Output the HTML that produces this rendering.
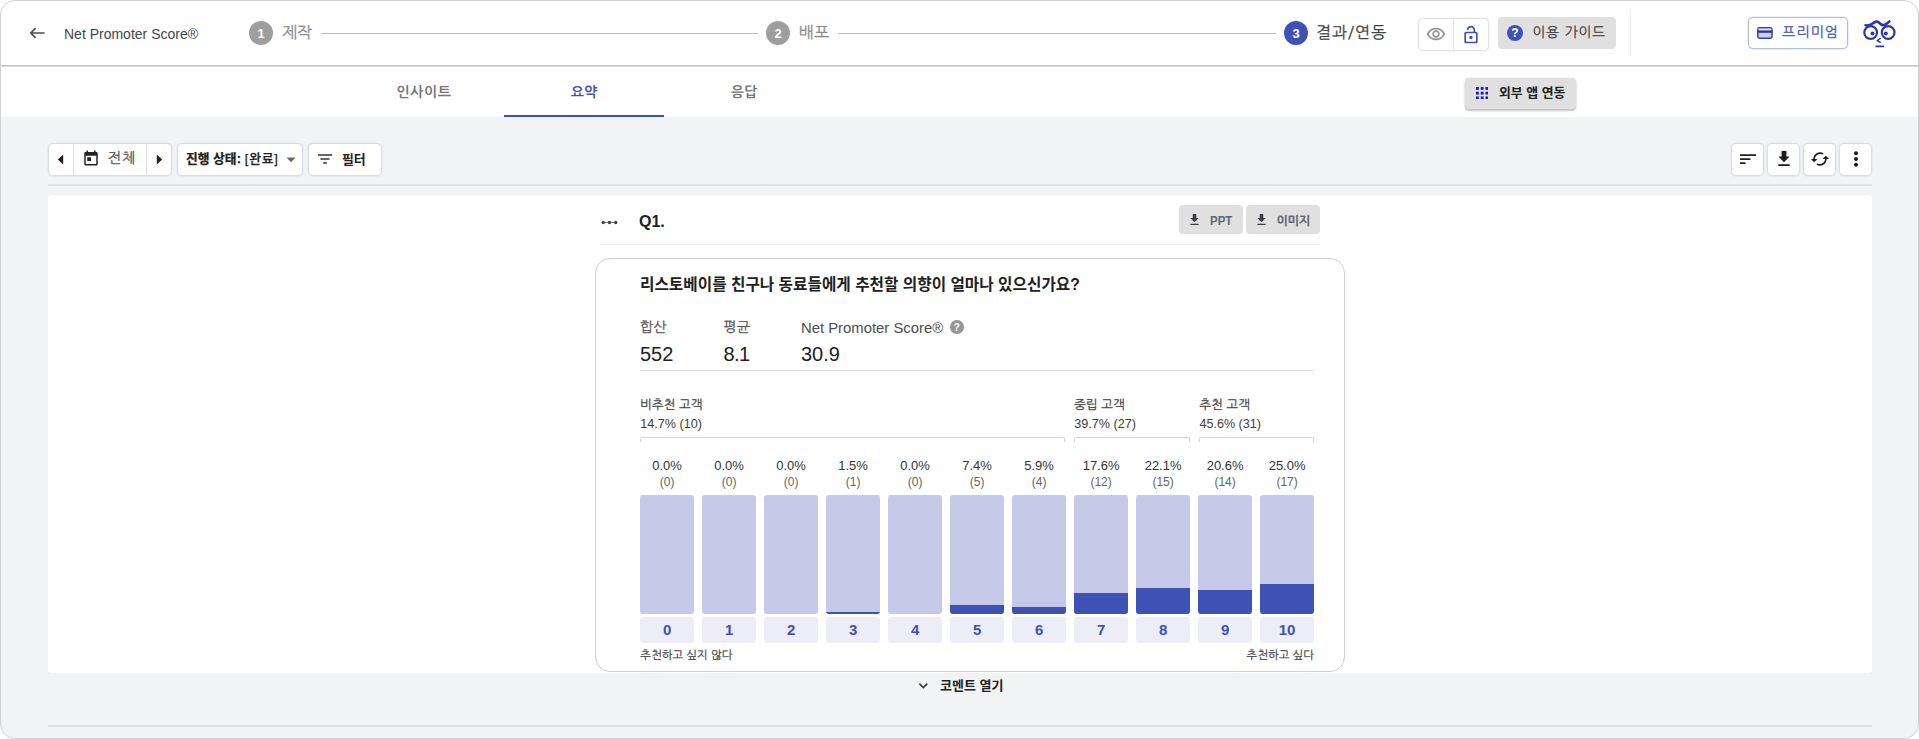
<!DOCTYPE html>
<html lang="ko">
<head>
<meta charset="utf-8">
<title>Net Promoter Score®</title>
<style>
*{box-sizing:border-box;margin:0;padding:0}
html,body{width:1919px;height:739px;overflow:hidden;background:#fff}
body{font-family:"Liberation Sans","NanumGothic","Noto Sans CJK KR",sans-serif;color:#212121;position:relative}
.abs{position:absolute}
#frame{position:absolute;left:0;top:0;width:1919px;height:739px;border-radius:15px;overflow:hidden;background:#f1f3f5}
#frameb{position:absolute;left:0;top:0;width:1919px;height:739px;border-radius:15px;border:1px solid #d2d2d2;z-index:50;pointer-events:none}
#hdr{left:0;top:0;width:1919px;height:66px;background:#fff;border-bottom:1px solid #c2c2c2;box-shadow:0 1px 0.700px rgba(0,0,0,.130);z-index:5}
#tabs{left:0;top:66px;width:1919px;height:51px;background:#fff}
.t{position:absolute;white-space:nowrap;line-height:1}
.ko{font-family:"NanumGothic","Noto Sans CJK KR",sans-serif;-webkit-text-stroke:0.250px currentColor}
.kb{font-family:"Liberation Sans","Noto Sans CJK KR","NanumGothic",sans-serif;font-weight:700}
.box{position:absolute;background:#fff;border:1px solid #d9dde4;border-radius:5px;box-shadow:0 0 0 0.500px rgba(217,221,228,.6)}

.gl{font-size:12.5px;color:#444}
.gv{font-size:12.6px;color:#3c3c3c}
.br{height:5px;border:1px solid #d6d6d6;border-bottom:none;border-radius:2px 2px 0 0}
.pc{width:53.6px;text-align:center;font-size:13px;color:#333}
.ct{width:53.6px;text-align:center;font-size:12px;color:#666}
.bar{top:495px;width:53.6px;height:118.5px;background:#c5cae9;border-radius:3px;overflow:hidden}
.bar i{position:absolute;left:0;bottom:0;width:100%;background:#3f51b5}
.nb{top:617px;width:53.6px;height:26px;background:#ededf8;border-radius:3px;text-align:center;font-size:15px;font-weight:700;color:#3f51b5;line-height:26px}
.el{font-size:11.4px;color:#4a4a4a}
</style>
</head>
<body>
<div id="frame">

<!-- ===== header ===== -->
<div id="hdr" class="abs">
  <svg class="abs" style="left:29px;top:25px" width="17" height="16" viewBox="0 0 17 16"><path d="M15.6 8H2M6.600 3.200L1.800 8L6.600 12.800" fill="none" stroke="#4f4f4f" stroke-width="1.700"/></svg>
  <div class="t" id="title" style="left:64px;top:27px;font-size:14px;color:#41464e">Net Promoter Score®</div>

  <div class="abs" style="left:249px;top:21px;width:24px;height:24px;border-radius:50%;background:#9e9e9e"></div>
  <div class="t" style="left:249px;top:26.500px;width:24px;text-align:center;font-size:13px;font-weight:700;color:#fff">1</div>
  <div class="t ko" id="s1" style="left:282px;top:24px;font-size:16px;color:#8a8a8a">제작</div>
  <div class="abs" style="left:321px;top:33px;width:437px;height:1px;background:#bdbdbd"></div>

  <div class="abs" style="left:766px;top:21px;width:24px;height:24px;border-radius:50%;background:#9e9e9e"></div>
  <div class="t" style="left:766px;top:26.500px;width:24px;text-align:center;font-size:13px;font-weight:700;color:#fff">2</div>
  <div class="t ko" id="s2" style="left:799px;top:24px;font-size:16px;color:#8a8a8a">배포</div>
  <div class="abs" style="left:838px;top:33px;width:438px;height:1px;background:#bdbdbd"></div>

  <div class="abs" style="left:1284px;top:21px;width:24px;height:24px;border-radius:50%;background:#3f51b5"></div>
  <div class="t" style="left:1284px;top:26.500px;width:24px;text-align:center;font-size:13px;font-weight:700;color:#fff">3</div>
  <div class="t ko" id="s3" style="left:1316px;top:24px;font-size:16px;letter-spacing:1px;color:#424242">결과/연동</div>

  <div class="box" style="left:1418px;top:18px;width:71px;height:33px;border-color:#e3e3e3;box-shadow:0 0 0 0.500px rgba(227,227,227,.6)"></div>
  <div class="abs" style="left:1453px;top:18px;width:1px;height:33px;background:#e3e3e3"></div>
  <svg class="abs" style="left:1426px;top:24px" width="20" height="20" viewBox="0 0 24 24"><path d="M12 6.5c3.8 0 7.2 2.1 8.800 5.500-1.600 3.400-5 5.500-8.800 5.500s-7.200-2.100-8.800-5.500C4.800 8.600 8.200 6.500 12 6.500m0-2C7 4.500 2.700 7.600 1 12c1.700 4.400 6 7.500 11 7.500s9.300-3.100 11-7.500c-1.700-4.400-6-7.500-11-7.500zm0 5c1.400 0 2.500 1.100 2.500 2.500s-1.100 2.500-2.500 2.500-2.500-1.100-2.500-2.500 1.100-2.500 2.500-2.500m0-2c-2.500 0-4.500 2-4.500 4.500s2 4.500 4.500 4.500 4.500-2 4.500-4.500-2-4.500-4.500-4.500z" fill="#959595"/></svg>
  <svg class="abs" style="left:1461px;top:25px" width="20" height="20" viewBox="0 0 24 24"><path d="M12 13c-1.100 0-2 .9-2 2s.9 2 2 2 2-.9 2-2-.9-2-2-2zm6-5h-1V6c0-2.760-2.240-5-5-5-2.280 0-4.270 1.540-4.840 3.750-.14.540.18 1.080.72 1.220.53.140 1.080-.18 1.220-.72C9.440 3.930 10.630 3 12 3c1.650 0 3 1.350 3 3v2H6c-1.100 0-2 .9-2 2v10c0 1.100.9 2 2 2h12c1.100 0 2-.9 2-2V10c0-1.100-.9-2-2-2zm0 11c0 .55-.45 1-1 1H7c-.55 0-1-.45-1-1v-8c0-.55.450-1 1-1h10c.55 0 1 .45 1 1v8z" fill="#3f51b5"/></svg>

  <div class="abs" style="left:1498px;top:17px;width:118px;height:32px;border-radius:4px;background:#e0e0e0"></div>
  <div class="abs" style="left:1507px;top:25px;width:16px;height:16px;border-radius:50%;background:#3f51b5"></div>
  <div class="t" style="left:1507px;top:27px;width:16px;text-align:center;font-size:12px;font-weight:700;color:#fff">?</div>
  <div class="t ko" id="guide" style="left:1532.500px;top:26px;font-size:13.700px;letter-spacing:0.900px;color:#424242">이용 가이드</div>

  <div class="abs" style="left:1630px;top:9px;width:1px;height:48px;background:#eceef4"></div>

  <div class="abs" style="left:1748px;top:17px;width:100px;height:32px;border-radius:5px;border:1px solid #b4bbe8;box-shadow:0 0 0 0.5px rgba(180,187,232,.5);background:#fff"></div>
  <svg class="abs" style="left:1757px;top:27px" width="16" height="12" viewBox="0 0 16 12"><rect x="0.800" y="0.800" width="14.200" height="10.400" rx="1.600" fill="#ccd0ee" stroke="#3342b0" stroke-width="1.500"/><rect x="1.500" y="1.700" width="12.800" height="1.200" fill="#e4e6f6"/><rect x="0.500" y="3.500" width="14.800" height="2.300" fill="#2a36a8"/></svg>
  <div class="t ko" id="prem" style="left:1782px;top:25px;font-size:14px;color:#3f51b5;letter-spacing:1.100px">프리미엄</div>

  <svg class="abs" style="left:1856px;top:14px" width="48" height="38" viewBox="0 0 48 38">
    <g fill="none" stroke="#2a36b1" stroke-linecap="round" stroke-linejoin="round">
      <circle cx="14.650" cy="18.500" r="6.350" stroke-width="2.200"/>
      <circle cx="32.150" cy="18.500" r="6.350" stroke-width="2.200"/>
      <path d="M9.600 11.200C12.500 12.700 15.500 10.200 18 8.600C20.300 7.100 21.800 7.100 23.300 8.900C25 11 26.300 11.600 28.300 10.900C30.500 10.100 32 8.900 33.400 7.400" stroke-width="2.600"/>
      <path d="M24.200 24.500L21.200 26.500L24.200 28.300" stroke-width="1.500"/>
      <path d="M19.400 32.400H28" stroke-width="1.900" stroke-linecap="butt"/>
    </g>
    <circle cx="16.500" cy="19.500" r="2" fill="#2a36b1"/>
    <circle cx="29.800" cy="19.500" r="2" fill="#2a36b1"/>
  </svg>
</div>

<!-- ===== tabs ===== -->
<div id="tabs" class="abs">
  <div class="t ko" id="tab1" style="-webkit-text-stroke:0;left:344px;width:160px;text-align:center;top:18.500px;font-size:14px;letter-spacing:0.600px;font-weight:700;color:#757575">인사이트</div>
  <div class="t ko" id="tab2" style="-webkit-text-stroke:0;left:504px;width:160px;text-align:center;top:18.500px;font-size:14px;font-weight:700;color:#3f51b5">요약</div>
  <div class="t ko" id="tab3" style="-webkit-text-stroke:0;left:664px;width:160px;text-align:center;top:18.500px;font-size:14px;font-weight:700;color:#757575">응답</div>
  <div class="abs" style="left:504px;top:48.500px;width:160px;height:2.500px;background:#3f51b5"></div>

  <div class="abs" style="left:1465px;top:12px;width:111px;height:31px;border-radius:4px;background:#e0e0e0;box-shadow:0 2px 2px rgba(0,0,0,.22),0 0 2px rgba(0,0,0,.12)"></div>
  <svg class="abs" style="left:1476px;top:21px" width="12.300" height="12.300" viewBox="0 0 13 13"><g fill="#1a18c4"><rect x="0" y="0" width="3" height="3"/><rect x="5" y="0" width="3" height="3"/><rect x="10" y="0" width="3" height="3"/><rect x="0" y="5" width="3" height="3"/><rect x="5" y="5" width="3" height="3"/><rect x="10" y="5" width="3" height="3"/><rect x="0" y="10" width="3" height="3"/><rect x="5" y="10" width="3" height="3"/><rect x="10" y="10" width="3" height="3"/></g></svg>
  <div class="t kb" id="ext" style="left:1499px;top:21px;font-size:12.900px;font-weight:700;color:#212121">외부 앱 연동</div>
</div>

<!-- ===== toolbar ===== -->
<div class="box" style="left:48px;top:143px;width:124px;height:33px"></div>
<div class="abs" style="left:73px;top:143px;width:1px;height:33px;background:#dcdfe6"></div>
<div class="abs" style="left:146px;top:143px;width:1px;height:33px;background:#dcdfe6"></div>
<svg class="abs" style="left:57px;top:153.500px" width="7" height="11" viewBox="0 0 7 11"><path d="M6.200 0.500L0.800 5.500L6.200 10.500z" fill="#222"/></svg>
<svg class="abs" style="left:156px;top:153.500px" width="7" height="11" viewBox="0 0 7 11"><path d="M0.800 0.500L6.200 5.500L0.800 10.500z" fill="#222"/></svg>
<svg class="abs" style="left:82px;top:149px" width="18" height="18" viewBox="0 0 24 24"><path d="M19 4h-1V2h-2v2H8V2H6v2H5c-1.100 0-2 .9-2 2v14c0 1.100.9 2 2 2h14c1.100 0 2-.9 2-2V6c0-1.100-.9-2-2-2zm0 16H5V9h14v11zM7 11h5v5H7z" fill="#222"/></svg>
<div class="t ko" id="all" style="left:108px;top:151px;font-size:14.500px;color:#555">전체</div>

<div class="box" style="left:177px;top:143px;width:126px;height:33px"></div>
<div class="t ko" id="status" style="left:186px;top:153px;font-size:12.800px;color:#212121"><b class="kb" id="stb">진행 상태:</b> <span style="font-family:'Liberation Sans','Noto Sans CJK KR','NanumGothic',sans-serif;font-weight:500;font-size:12.800px;letter-spacing:0.800px;margin-left:0.300px;position:relative;top:-0.200px">[완료]</span></div>
<svg class="abs" style="left:286px;top:157px" width="10" height="6" viewBox="0 0 10 6"><path d="M0.500 0.500h9L5 5.200z" fill="#666"/></svg>

<div class="box" style="left:308px;top:143px;width:74px;height:33px"></div>
<svg class="abs" style="left:318px;top:154px" width="14" height="10" viewBox="0 0 14 10"><path d="M0 0.200h14v1.600H0zM2.500 4.200h9v1.600h-9zM5.200 8.200h3.600v1.600H5.200z" fill="#333"/></svg>
<div class="t kb" id="filter" style="left:342px;top:153.500px;font-size:12.900px;font-weight:700;color:#212121">필터</div>

<div class="box" style="left:1731px;top:143px;width:33px;height:33px"></div>
<div class="box" style="left:1767px;top:143px;width:33px;height:33px"></div>
<div class="box" style="left:1803px;top:143px;width:33px;height:33px"></div>
<div class="box" style="left:1839px;top:143px;width:33px;height:33px"></div>
<svg class="abs" style="left:1740px;top:154px" width="16" height="10" viewBox="0 0 16 10"><path d="M0 0.200h16v1.700H0zM0 4.200h10.500v1.700H0zM0 8.200h5.500v1.700H0z" fill="#222"/></svg>
<svg class="abs" style="left:1778px;top:151px" width="12" height="15" viewBox="0 0 12 15"><path d="M3.600 0h4.800v5.600H11.600L6 11.200L0.400 5.600H3.600zM0.300 13.200h11.400v1.700H0.300z" fill="#1c1c1c"/></svg>
<svg class="abs" style="left:1810px;top:149px" width="20" height="20" viewBox="0 0 24 24"><path d="M19 8l-4 4h3c0 3.310-2.690 6-6 6-1.010 0-1.970-.25-2.800-.7l-1.460 1.460C8.970 19.540 10.430 20 12 20c4.420 0 8-3.580 8-8h3l-4-4zM6 12c0-3.310 2.690-6 6-6 1.010 0 1.970.25 2.800.7l1.460-1.460C15.030 4.460 13.570 4 12 4c-4.420 0-8 3.580-8 8H1l4 4 4-4H6z" fill="#1c1c1c"/></svg>
<svg class="abs" style="left:1853px;top:151px" width="6" height="16" viewBox="0 0 6 16"><circle cx="3" cy="2.200" r="2" fill="#1c1c1c"/><circle cx="3" cy="8" r="2" fill="#1c1c1c"/><circle cx="3" cy="13.800" r="2" fill="#1c1c1c"/></svg>

<div class="abs" style="left:48px;top:183.500px;width:1824px;height:2px;background:linear-gradient(#e4e6ea,#dcdfe3 45%,#dcdfe3 55%,#e6e8eb)"></div>

<!-- ===== card ===== -->
<div class="abs" id="card" style="left:48px;top:195px;width:1824px;height:478px;background:#fff;border-radius:4px"></div>

<svg class="abs" style="left:601px;top:220px" width="17" height="5" viewBox="0 0 17 5"><path d="M1 2.500h15" stroke="#555" stroke-width="0.800"/><circle cx="2.300" cy="2.500" r="1.700" fill="#444"/><circle cx="8.500" cy="2.500" r="1.700" fill="#444"/><circle cx="14.700" cy="2.500" r="1.700" fill="#444"/></svg>
<div class="t" id="q1" style="left:639px;top:214px;font-size:16px;font-weight:700;color:#212121">Q1.</div>

<div class="abs" style="left:1179px;top:205px;width:64px;height:29px;border-radius:4px;background:#e0e0e0"></div>
<svg class="abs" style="left:1189.500px;top:214px" width="9" height="11" viewBox="0 0 12 15"><path d="M3.600 0h4.800v5.600H11.600L6 11.200L0.400 5.600H3.600zM0.300 13.200h11.400v1.700H0.300z" fill="#3c4046"/></svg>
<div class="t" id="ppt" style="left:1210px;top:214px;font-size:13px;transform:scaleX(0.880);transform-origin:0 0;font-weight:700;color:#5f6673">PPT</div>
<div class="abs" style="left:1246px;top:205px;width:74px;height:29px;border-radius:4px;background:#e0e0e0"></div>
<svg class="abs" style="left:1257px;top:214px" width="9" height="11" viewBox="0 0 12 15"><path d="M3.600 0h4.800v5.600H11.600L6 11.200L0.400 5.600H3.600zM0.300 13.200h11.400v1.700H0.300z" fill="#3c4046"/></svg>
<div class="t ko" id="img" style="left:1276.500px;top:214.500px;font-size:12px;font-weight:700;color:#5f6673">이미지</div>

<div class="abs" style="left:600px;top:244px;width:720px;height:1px;background:#eef0f5"></div>

<div class="abs" id="inner" style="left:595px;top:258px;width:750px;height:414px;border:1px solid #cfcfcf;border-radius:15px;background:#fff"></div>

<div class="t kb" id="qt" style="left:640px;top:277px;font-size:15.700px;font-weight:700;color:#212121">리스토베이를 친구나 동료들에게 추천할 의향이 얼마나 있으신가요?</div>

<div class="t ko" id="l1" style="left:640px;top:320px;font-size:14px;color:#555">합산</div>
<div class="t ko" id="l2" style="left:723.500px;top:320px;font-size:14px;color:#555">평균</div>
<div class="t" id="l3" style="left:801px;top:320.600px;font-size:14.850px;color:#4c4c4c">Net Promoter Score®</div>
<div class="abs" style="left:950px;top:320px;width:13.500px;height:13.500px;border-radius:50%;background:#969696"></div>
<div class="t" style="left:950px;top:321.500px;width:13.500px;text-align:center;font-size:10.500px;font-weight:700;color:#fff">?</div>
<div class="t" id="v1" style="left:640px;top:344px;font-size:20px;color:#212121">552</div>
<div class="t" id="v2" style="left:723.500px;top:344px;font-size:20px;letter-spacing:-0.600px;color:#212121">8.1</div>
<div class="t" id="v3" style="left:801px;top:344px;font-size:20px;color:#212121">30.9</div>
<div class="abs" style="left:640px;top:370px;width:674px;height:1px;background:#dcdcdc"></div>

<div id="chart">
<div class="t ko gl" style="left:640.3px;top:398.5px">비추천 고객</div>
<div class="t gv" style="left:640.3px;top:418px">14.7% (10)</div>
<div class="abs br" style="left:640.3px;top:437px;width:424.4px"></div>
<div class="t ko gl" style="left:1074.3px;top:398.5px">중립 고객</div>
<div class="t gv" style="left:1074.3px;top:418px">39.7% (27)</div>
<div class="abs br" style="left:1074.3px;top:437px;width:115.6px"></div>
<div class="t ko gl" style="left:1199.4px;top:398.5px">추천 고객</div>
<div class="t gv" style="left:1199.4px;top:418px">45.6% (31)</div>
<div class="abs br" style="left:1199.4px;top:437px;width:114.5px"></div>
<div class="t pc" style="left:640.3px;top:458.5px">0.0%</div>
<div class="t ct" style="left:640.3px;top:475.7px">(0)</div>
<div class="abs bar" style="left:640.3px"></div>
<div class="abs nb" style="left:640.3px">0</div>
<div class="t pc" style="left:702.3px;top:458.5px">0.0%</div>
<div class="t ct" style="left:702.3px;top:475.7px">(0)</div>
<div class="abs bar" style="left:702.3px"></div>
<div class="abs nb" style="left:702.3px">1</div>
<div class="t pc" style="left:764.3px;top:458.5px">0.0%</div>
<div class="t ct" style="left:764.3px;top:475.7px">(0)</div>
<div class="abs bar" style="left:764.3px"></div>
<div class="abs nb" style="left:764.3px">2</div>
<div class="t pc" style="left:826.3px;top:458.5px">1.5%</div>
<div class="t ct" style="left:826.3px;top:475.7px">(1)</div>
<div class="abs bar" style="left:826.3px"><i style="height:1.7px"></i></div>
<div class="abs nb" style="left:826.3px">3</div>
<div class="t pc" style="left:888.3px;top:458.5px">0.0%</div>
<div class="t ct" style="left:888.3px;top:475.7px">(0)</div>
<div class="abs bar" style="left:888.3px"></div>
<div class="abs nb" style="left:888.3px">4</div>
<div class="t pc" style="left:950.3px;top:458.5px">7.4%</div>
<div class="t ct" style="left:950.3px;top:475.7px">(5)</div>
<div class="abs bar" style="left:950.3px"><i style="height:8.6px"></i></div>
<div class="abs nb" style="left:950.3px">5</div>
<div class="t pc" style="left:1012.3px;top:458.5px">5.9%</div>
<div class="t ct" style="left:1012.3px;top:475.7px">(4)</div>
<div class="abs bar" style="left:1012.3px"><i style="height:6.9px"></i></div>
<div class="abs nb" style="left:1012.3px">6</div>
<div class="t pc" style="left:1074.3px;top:458.5px">17.6%</div>
<div class="t ct" style="left:1074.3px;top:475.7px">(12)</div>
<div class="abs bar" style="left:1074.3px"><i style="height:20.5px"></i></div>
<div class="abs nb" style="left:1074.3px">7</div>
<div class="t pc" style="left:1136.3px;top:458.5px">22.1%</div>
<div class="t ct" style="left:1136.3px;top:475.7px">(15)</div>
<div class="abs bar" style="left:1136.3px"><i style="height:25.7px"></i></div>
<div class="abs nb" style="left:1136.3px">8</div>
<div class="t pc" style="left:1198.3px;top:458.5px">20.6%</div>
<div class="t ct" style="left:1198.3px;top:475.7px">(14)</div>
<div class="abs bar" style="left:1198.3px"><i style="height:24.0px"></i></div>
<div class="abs nb" style="left:1198.3px">9</div>
<div class="t pc" style="left:1260.3px;top:458.5px">25.0%</div>
<div class="t ct" style="left:1260.3px;top:475.7px">(17)</div>
<div class="abs bar" style="left:1260.3px"><i style="height:29.1px"></i></div>
<div class="abs nb" style="left:1260.3px">10</div>
<div class="t ko el" style="left:640.3px;top:649.5px">추천하고 싶지 않다</div>
<div class="t ko el" style="right:605px;top:649.5px">추천하고 싶다</div>
</div>

<!-- comment toggle -->
<svg class="abs" style="left:918px;top:682px" width="11" height="8" viewBox="0 0 11 8"><path d="M1.400 1.700L5.300 5.600L9.200 1.700" fill="none" stroke="#3a3a3a" stroke-width="1.700"/></svg>
<div class="t kb" id="cmt" style="left:940px;top:679px;font-size:13px;font-weight:700;color:#212121">코멘트 열기</div>

<div class="abs" style="left:48px;top:724.500px;width:1824px;height:2px;background:linear-gradient(#e4e6ea,#dcdfe3 45%,#dcdfe3 55%,#e6e8eb)"></div>

</div>
<div id="frameb"></div>
</body>
</html>
